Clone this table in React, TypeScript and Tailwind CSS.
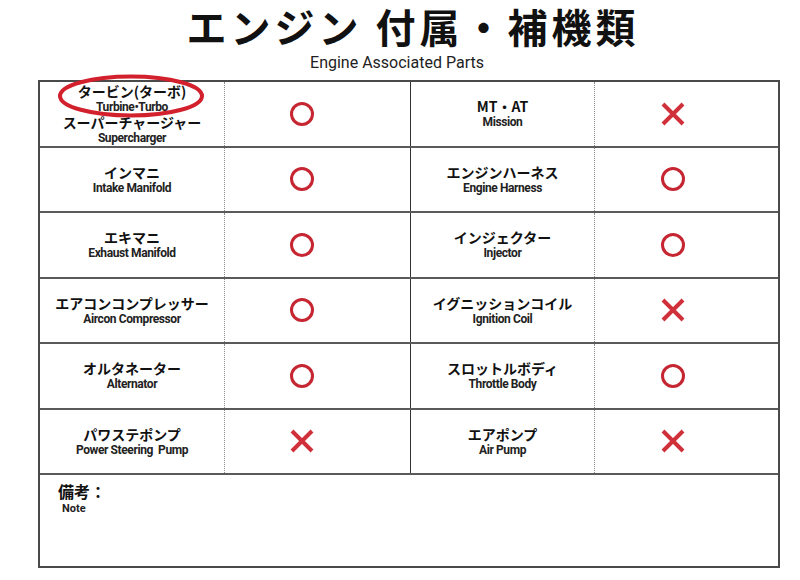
import React from "react";

type Part = { jp: string; en: string; jp2?: string; en2?: string; ok: boolean };

const left: Part[] = [
  { jp: "タービン(ターボ)", en: "Turbine•Turbo", jp2: "スーパーチャージャー", en2: "Supercharger", ok: true },
  { jp: "インマニ", en: "Intake Manifold", ok: true },
  { jp: "エキマニ", en: "Exhaust Manifold", ok: true },
  { jp: "エアコンコンプレッサー", en: "Aircon Compressor", ok: true },
  { jp: "オルタネーター", en: "Alternator", ok: true },
  { jp: "パワステポンプ", en: "Power Steering\u00a0\u00a0Pump", ok: false },
];

const right: Part[] = [
  { jp: "MT・AT", en: "Mission", ok: false },
  { jp: "エンジンハーネス", en: "Engine Harness", ok: true },
  { jp: "インジェクター", en: "Injector", ok: true },
  { jp: "イグニッションコイル", en: "Ignition Coil", ok: false },
  { jp: "スロットルボディ", en: "Throttle Body", ok: true },
  { jp: "エアポンプ", en: "Air Pump", ok: false },
];

const jpFont = "[font-family:'Noto_Sans_CJK_JP','Noto_Sans',sans-serif]";
const enFont = "[font-family:'Roboto','Noto_Sans',sans-serif]";

const Mark = ({ ok }: { ok: boolean }) =>
  ok ? (
    <svg width="24" height="24" viewBox="0 0 24 24">
      <circle cx="12" cy="12" r="10.5" fill="none" stroke="#c62632" strokeWidth="3" />
    </svg>
  ) : (
    <svg width="24" height="24" viewBox="0 0 24 24">
      <path d="M2 2 L22 22 M22 2 L2 22" stroke="#d0303a" strokeWidth="4" />
    </svg>
  );

const Label = ({ jp, en }: { jp: string; en: string }) => (
  <div className="flex flex-col items-center">
    <span className={`${jpFont} text-[14px] font-bold leading-[17px] text-[#111]`}>{jp}</span>
    <span className={`${enFont} text-[12px] font-bold leading-[14px] text-[#222] tracking-[-0.4px]`}>{en}</span>
  </div>
);

const Row = ({ l, r, first }: { l: Part; r: Part; first?: boolean }) => (
  <div className="grid grid-cols-[185px_186px_184px_185px] h-[65.5px] border-b-2 border-[#5a5a5a]">
    <div className="relative flex items-center justify-center border-r border-dotted border-[#8a8a8a]">
      {l.jp2 ? (
        <div className="flex flex-col items-center">
          <span className={`${jpFont} text-[14px] font-bold leading-[17px] text-[#111]`}>{l.jp}</span>
          <span className={`${enFont} text-[12px] font-bold leading-[14px] text-[#222] tracking-[-0.4px]`}>{l.en}</span>
          <span className={`${jpFont} text-[14px] font-bold leading-[17px] text-[#111]`}>{l.jp2}</span>
          <span className={`${enFont} text-[12px] font-bold leading-[14px] text-[#222] tracking-[-0.4px]`}>{l.en2}</span>
        </div>
      ) : (
        <Label jp={l.jp} en={l.en} />
      )}
      {first && (
        <svg className="absolute left-[18px] top-[-8px]" width="148" height="46" viewBox="0 0 148 46">
          <ellipse cx="73" cy="22" rx="71" ry="19.5" fill="none" stroke="#d2202c" strokeWidth="4" />
        </svg>
      )}
    </div>
    <div className="flex items-center pl-[65px] border-r border-[#333]">
      <Mark ok={l.ok} />
    </div>
    <div className="flex items-center justify-center border-r border-dotted border-[#8a8a8a]">
      <Label jp={r.jp} en={r.en} />
    </div>
    <div className="flex items-center pl-[66px]">
      <Mark ok={r.ok} />
    </div>
  </div>
);

export default function App() {
  return (
    <div className="w-[800px] h-[580px] bg-white pt-[4px]">
      <h1 className={`${jpFont} text-[40px] font-bold leading-[44px] tracking-[4px] text-center pl-[26px] text-[#111]`}>
        エンジン 付属・補機類
      </h1>
      <p className={`${enFont} mt-[7px] text-[16px] leading-[16px] text-center text-[#222] pr-[6px]`}>
        Engine Associated Parts
      </p>
      <div className="ml-[38px] mt-[9px] w-[742px] border-2 border-[#4a4a4a]">
        {left.map((l, i) => (
          <Row key={i} l={l} r={right[i]} first={i === 0} />
        ))}
        <div className="h-[91px] pl-[18px] pt-[6px]">
          <div className={`${jpFont} text-[16px] font-bold leading-[20px] text-[#111]`}>備考：</div>
          <div className={`${enFont} mt-[1px] text-[11px] font-bold leading-[13px] text-[#222] pl-[4px]`}>Note</div>
        </div>
      </div>
    </div>
  );
}
